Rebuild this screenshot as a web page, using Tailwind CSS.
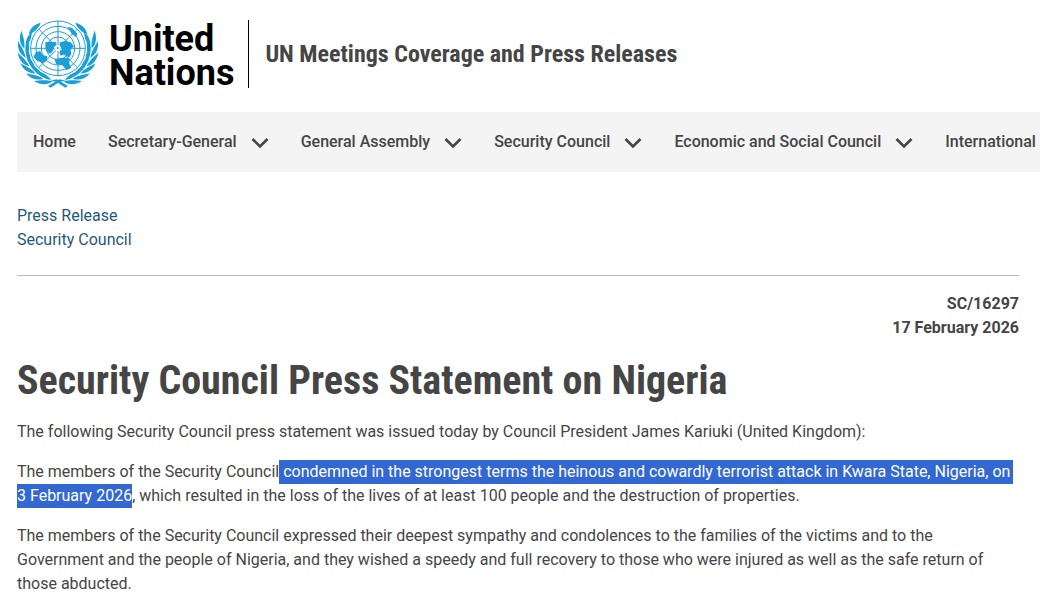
<!DOCTYPE html>
<html lang="en">
  <head>
    <meta charset="UTF-8" />
    <meta name="viewport" content="width=device-width, initial-scale=1.0" />
    <title>Security Council Press Statement on Nigeria</title>
    <script src="https://cdn.jsdelivr.net/npm/@tailwindcss/browser@4"></script>
  </head>
  <body class="bg-white font-['Roboto',sans-serif] text-base leading-6 text-[#454545] overflow-x-hidden">
    <header class="pl-[17px] pt-5">
      <div class="flex items-center">
        <a href="#" class="flex items-center gap-[10px] border-r border-black pr-[14px] text-black">
          <svg viewBox="0 0 246 204" class="h-[68px] w-[82px] shrink-0" fill="#1a9fd9" aria-hidden="true">
            <defs>
              <g id="leaves">
                <path d="M4 101C-8 114-26 120-50 111C-36 108-20 99 4 101Z" />
                <path d="M0 97C-12 86-26 80-46 80C-36 92-22 99 0 97Z" />
              </g>
              <g id="branch">
                <use href="#leaves" transform="rotate(12)" />
                <use href="#leaves" transform="rotate(28)" />
                <use href="#leaves" transform="rotate(44)" />
                <use href="#leaves" transform="rotate(60)" />
                <use href="#leaves" transform="rotate(76)" />
                <use href="#leaves" transform="rotate(92)" />
                <path d="M-52-77C-72-72-84-60-88-42C-72-48-58-58-52-77Z" />
                <path d="M-24 97L-4 93L30 113L22 118L-4 101Z" />
              </g>
            </defs>
            <g transform="translate(123 85)">
              <use href="#branch" />
              <use href="#branch" transform="scale(-1 1)" />
              <circle r="86" fill="#fff" />
              <g fill="none" stroke="#1a9fd9" stroke-width="3">
                <circle r="82" />
                <circle r="66" />
                <circle r="50" />
                <circle r="34" />
                <path d="M0-82V82M-82 0H82M-58-58L58 58M58-58L-58 58" />
              </g>
              <path d="M-38-18L-22-20L-6-18L-4-10L-12-4L-14 6L-22 16L-32 12L-38 2Z" />
              <path d="M-66 12L-54 8L-46 20L-32 24L-34 38L-46 44L-62 38L-74 26Z" />
              <path d="M6-18L22-22L38-18L48-6L38 4L40 18L32 28L20 18L8 22L4 12L12 2L4-8Z" />
              <path d="M-10 32L14 28L34 30L34 46L40 58L26 66L12 50L-6 48Z" />
              <path d="M28-64L42-62L58-44L54-34L42-42Z" />
              <circle cx="-1" cy="-1" r="9" fill="#fff" />
              <circle cx="-1" cy="-1" r="3" />
            </g>
          </svg>
          <span class="mt-0.5 -mb-0.5 text-4xl leading-[34px] font-bold">United<br />Nations</span>
        </a>
        <p class="pl-4 font-['Roboto_Condensed','Liberation_Sans_Narrow',sans-serif] text-2xl font-bold">UN Meetings Coverage and Press Releases</p>
      </div>
      <nav class="mt-6 flex h-[60px] items-center gap-8 bg-[#f4f4f4] pl-4 font-medium whitespace-nowrap">
        <a href="#">Home</a>
        <button type="button" class="flex items-center gap-[14px]">Secretary-General
          <svg viewBox="0 0 18 12" class="mt-0.5 h-3 w-[18px]" fill="none" stroke="currentColor" stroke-width="2.6"><path d="M1.5 2L9 9.5L16.5 2" /></svg>
        </button>
        <button type="button" class="flex items-center gap-[14px]">General Assembly
          <svg viewBox="0 0 18 12" class="mt-0.5 h-3 w-[18px]" fill="none" stroke="currentColor" stroke-width="2.6"><path d="M1.5 2L9 9.5L16.5 2" /></svg>
        </button>
        <button type="button" class="flex items-center gap-[14px]">Security Council
          <svg viewBox="0 0 18 12" class="mt-0.5 h-3 w-[18px]" fill="none" stroke="currentColor" stroke-width="2.6"><path d="M1.5 2L9 9.5L16.5 2" /></svg>
        </button>
        <button type="button" class="flex items-center gap-[14px]">Economic and Social Council
          <svg viewBox="0 0 18 12" class="mt-0.5 h-3 w-[18px]" fill="none" stroke="currentColor" stroke-width="2.6"><path d="M1.5 2L9 9.5L16.5 2" /></svg>
        </button>
        <button type="button">International</button>
      </nav>
    </header>
    <main class="mr-[21px] ml-[17px] pt-8">
      <div class="flex flex-col items-start border-b border-[#bbb] pb-[23px] text-[#1f5a7a]">
        <a href="#">Press Release</a>
        <a href="#">Security Council</a>
      </div>
      <p class="mt-4 text-right font-bold">SC/16297<br />17 February 2026</p>
      <h1 class="mt-4 font-['Roboto_Condensed','Liberation_Sans_Narrow',sans-serif] text-[40px] leading-[50px] font-bold">Security Council Press Statement on Nigeria</h1>
      <div class="mt-[14px] space-y-4">
        <p>The following Security Council press statement was issued today by Council President James Kariuki (United Kingdom):</p>
        <p>The members of the Security Council<mark class="bg-[#3367d1] pt-0.5 pr-[3px] pb-[3px] text-white"> condemned in the strongest terms the heinous and cowardly terrorist attack in Kwara State, Nigeria, on</mark> <mark class="bg-[#3367d1] pt-0.5 pb-[3px] text-white">3&nbsp;February 2026</mark>, which resulted in the loss of the lives of at least 100 people and the destruction of properties.</p>
        <p>The members of the Security Council expressed their deepest sympathy and condolences to the families of the victims and to the Government and the people of Nigeria, and they wished a speedy and full recovery to those who were injured as well as the safe return of those abducted.</p>
      </div>
    </main>
  </body>
</html>
